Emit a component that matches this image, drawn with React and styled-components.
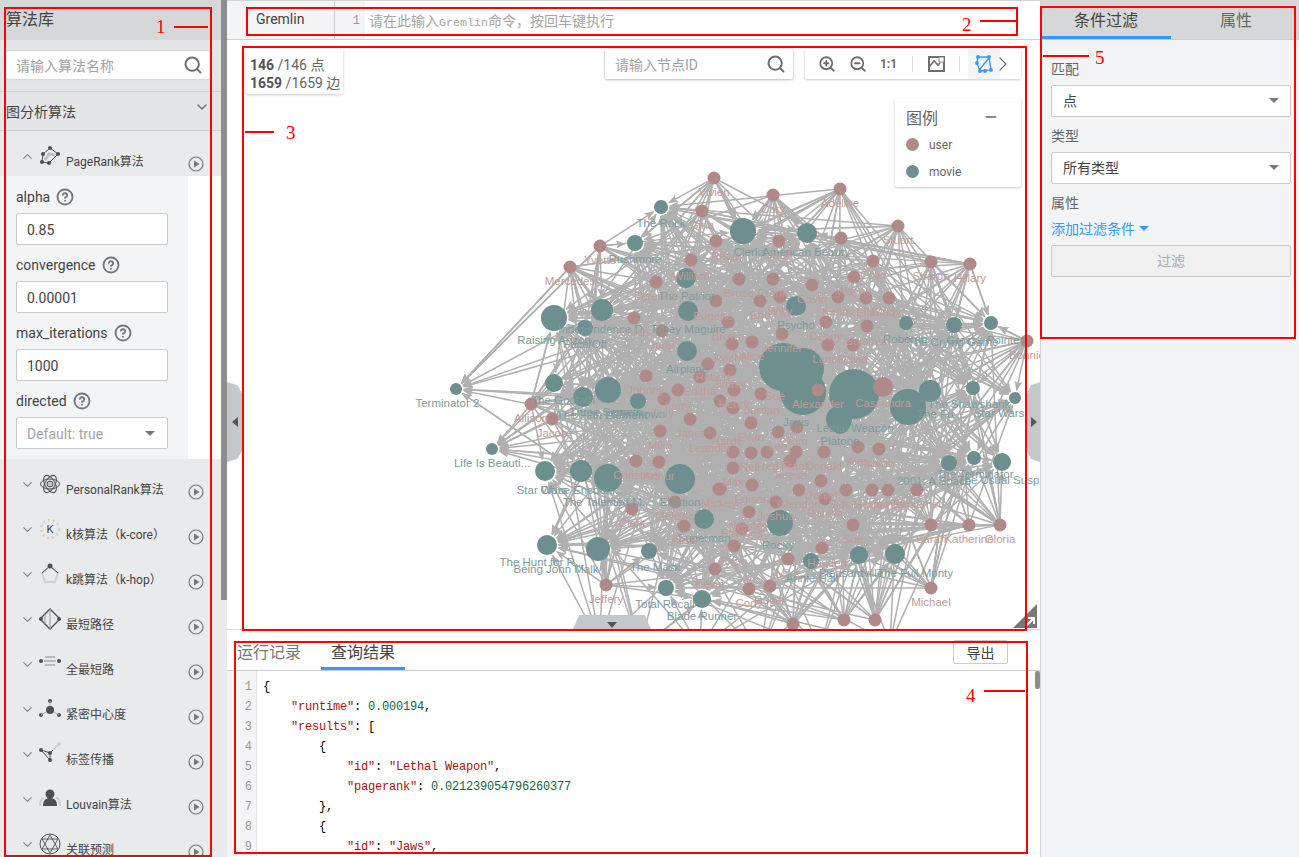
import React from 'react';
import styled, { createGlobalStyle } from 'styled-components';
import { Search, ChevronDown, ChevronUp, ChevronRight, ZoomIn, ZoomOut, Minus, CircleHelp } from 'lucide-react';

const GlobalStyle = createGlobalStyle`
  html, body {
    margin: 0;
    padding: 0;
    overflow: hidden;
    background: #fff;
    font-family: Roboto, "Noto Sans CJK SC", sans-serif;
    color: #333;
  }
  * { box-sizing: border-box; }
`;

const Page = styled.div`
  position: relative;
  display: flex;
  width: 1299px;
  height: 857px;
  overflow: hidden;
`;

/* ---------- left panel ---------- */
const Sidebar = styled.aside`
  width: 221px;
  height: 857px;
  overflow: hidden;
  background: #e9eaec;
  flex: none;
`;

const SidebarTitle = styled.div`
  height: 40px;
  padding-left: 6px;
  line-height: 40px;
  font-size: 16px;
  background: #d6d7d9;
  color: #444;
`;

const SearchArea = styled.div`
  height: 52px;
  padding: 11px 11px 0 6px;
  background: #e4e5e7;
  border-bottom: 1px solid #cfd0d2;
`;

const SearchBox = styled.div`
  display: flex;
  align-items: center;
  justify-content: space-between;
  height: ${({ $h }) => $h || 28}px;
  padding: 0 7px 0 10px;
  background: #fff;
  border-radius: 2px;
  box-shadow: 0 0 2px rgba(0, 0, 0, 0.2);
  font-size: 14px;
  color: #a3a3a3;
  svg { color: #6f6f6f; }
`;

const GroupTitle = styled.div`
  display: flex;
  align-items: center;
  justify-content: space-between;
  height: 39px;
  padding: 0 11px 0 6px;
  font-size: 14px;
  color: #444;
  background: #e4e5e7;
  border-bottom: 1px solid #cfd0d2;
  svg { color: #777; margin-top: -8px; }
`;

const AlgoRow = styled.div`
  display: flex;
  align-items: flex-start;
  height: 45px;
  padding-left: 20px;
  background: #e9eaec;
`;

const RowChevron = styled.span`
  display: flex;
  width: 15px;
  margin-top: 18px;
  margin-right: 3px;
  color: #8a8a8a;
`;

const AlgoIcon = styled.svg`
  width: 22px;
  height: 22px;
  margin-top: 14px;
  margin-left: 1px;
  flex: none;
  overflow: visible;
`;

const AlgoName = styled.span`
  flex: 1;
  margin-top: 22px;
  margin-left: 5px;
  font-size: 12px;
  line-height: 18px;
  color: #444;
  white-space: nowrap;
`;

const PlayIcon = styled.svg`
  width: 16px;
  height: 16px;
  margin-top: 25px;
  margin-right: 17px;
  flex: none;
`;

const ParamsWrap = styled.div`
  display: flex;
  background: #fff;
`;

const Params = styled.div`
  width: 188px;
  height: 283px;
  padding: 11px 20px 0 16px;
  background: #f3f4f6;
`;

const ParamLabel = styled.div`
  display: flex;
  align-items: center;
  gap: 6px;
  height: 20px;
  font-size: 14px;
  color: #444;
  svg { color: #777; }
`;

const ParamInput = styled.div`
  display: flex;
  align-items: center;
  justify-content: space-between;
  height: 32px;
  margin: 6px 0 10px;
  padding: 1px 12px 0 10px;
  background: #fff;
  border: 1px solid #ccc;
  border-radius: 2px;
  font-size: 14px;
  color: ${({ $muted }) => ($muted ? '#a5a5a5' : '#444')};
`;

const Caret = styled.span`
  width: 0;
  height: 0;
  border-left: 5px solid transparent;
  border-right: 5px solid transparent;
  border-top: 5px solid ${({ $color }) => $color || '#777'};
`;

const Scrollbar = styled.div`
  width: 6px;
  flex: none;
  background: linear-gradient(#8e8e8e 0, #8e8e8e 600px, #e9eaec 600px);
`;

/* ---------- centre ---------- */
const Main = styled.main`
  display: flex;
  flex-direction: column;
  width: 813px;
  height: 857px;
  flex: none;
  border-top: 1px solid #d4d4d4;
`;

const QueryBar = styled.div`
  display: flex;
  height: 39px;
  flex: none;
  border-bottom: 1px solid #cfcfcf;
  font-size: 14px;
`;

const QueryKind = styled.div`
  width: 108px;
  padding: 10px 0 0 29px;
  background: #f3f4f6;
  border-right: 1px solid #ccc;
  color: #444;
`;

const QueryGutter = styled.div`
  width: 30px;
  padding: 13px 5px 0 0;
  text-align: right;
  background: #f3f4f6;
  color: #999;
  font: 12px "Liberation Mono", monospace;
`;

const QueryHolder = styled.div`
  padding: 9px 0 0 4px;
  color: #a5a5a5;
  font-family: "Noto Sans CJK SC", sans-serif;
  font-size: 14px;
`;

const QueryLatin = styled.span`
  font: 11.67px "Liberation Mono", monospace;
`;

const GraphArea = styled.section`
  position: relative;
  height: 590px;
  flex: none;
  overflow: hidden;
  background: #fff;
  border-bottom: 1px solid #dcdcdc;
`;

const GraphSvg = styled.svg`
  position: absolute;
  left: 0;
  top: 0;
  width: 813px;
  height: 589px;
  text { font-family: "Liberation Sans", Arial, sans-serif; font-size: 11.5px; text-anchor: middle; }
`;

const Floating = styled.div`
  position: absolute;
  left: ${({ $x }) => $x}px;
  top: ${({ $y }) => $y}px;
  width: ${({ $w }) => $w}px;
  background: #fff;
  border-radius: 2px;
  box-shadow: 0 1px 3px rgba(0, 0, 0, 0.22);
`;

const Stats = styled(Floating)`
  height: 46px;
  padding: 8px 0 0 4px;
  font-size: 14px;
  line-height: 18px;
  color: #666;
  white-space: nowrap;
  b { color: #555; font-weight: 700; }
`;

const Toolbar = styled(Floating)`
  display: flex;
  align-items: center;
  height: 30px;
  padding-left: 6px;
  color: #6e6e6e;
`;

const ToolSlot = styled.span`
  display: flex;
  align-items: center;
  justify-content: center;
  width: ${({ $w }) => $w || 31}px;
  height: 30px;
  font-size: 12px;
  font-weight: 700;
  background: ${({ $active }) => ($active ? '#f3f4f6' : 'transparent')};
`;

const ToolDivider = styled.span`
  width: 1px;
  height: 16px;
  margin: 0 8px;
  background: #ddd;
`;

const ToolChevron = styled.span`
  display: flex;
  margin-left: -9px;
  color: #777;
`;

const Legend = styled(Floating)`
  height: 89px;
  padding: 8px 11px;
  font-size: 12px;
  color: #666;
`;

const LegendHead = styled.div`
  display: flex;
  align-items: center;
  justify-content: space-between;
  height: 22px;
  margin-bottom: 3px;
  padding-right: 11px;
  font-size: 16px;
  svg { color: #666; }
`;

const LegendItem = styled.div`
  display: flex;
  align-items: center;
  gap: 10px;
  height: 27px;
`;

const Dot = styled.i`
  width: 13px;
  height: 13px;
  border-radius: 50%;
  background: ${({ $color }) => $color};
`;

const SideHandle = styled.div`
  position: absolute;
  top: 342px;
  ${({ $side }) => $side}: 0;
  display: flex;
  align-items: center;
  justify-content: center;
  width: ${({ $w }) => $w}px;
  height: 80px;
  background: #c5c8cb;
  clip-path: ${({ $side }) => ($side === 'left'
    ? 'polygon(0 0, 70% 4%, 100% 14%, 100% 86%, 70% 96%, 0 100%)'
    : 'polygon(100% 0, 30% 4%, 0 14%, 0 86%, 30% 96%, 100% 100%)')};
`;

const Arrow = styled.span`
  width: 0;
  height: 0;
  border-top: 5px solid transparent;
  border-bottom: 5px solid transparent;
  ${({ $dir }) => ($dir === 'left' ? 'border-right: 6px solid #555;' : 'border-left: 6px solid #555;')}
`;

const BottomHandle = styled.div`
  position: absolute;
  left: 346px;
  bottom: 0;
  display: flex;
  justify-content: center;
  align-items: flex-end;
  width: 78px;
  height: 14px;
  padding-bottom: 1px;
  background: #c5c8cb;
  clip-path: polygon(8% 0, 92% 0, 100% 100%, 0 100%);
  border-radius: 6px 6px 0 0;
`;

const ArrowDown = styled.span`
  width: 0;
  height: 0;
  border-left: 5px solid transparent;
  border-right: 5px solid transparent;
  border-top: 6px solid #555;
`;

const CornerSvg = styled.svg`
  position: absolute;
  right: 3px;
  bottom: 1px;
  width: 24px;
  height: 24px;
`;

const ResultPanel = styled.section`
  position: relative;
  flex: 1;
  overflow: hidden;
`;

const ResultTabs = styled.div`
  display: flex;
  align-items: stretch;
  height: 41px;
  padding-left: 10px;
  border-bottom: 1px solid #ccc;
  font-size: 16px;
`;

const ResultTab = styled.div`
  width: ${({ $w }) => $w}px;
  margin-right: ${({ $mr }) => $mr || 0}px;
  padding: 9px 0 0 ${({ $pl }) => $pl || 0}px;
  color: ${({ $active }) => ($active ? '#444' : '#777')};
  border-bottom: ${({ $active }) => ($active ? '3px solid #3399ff' : 'none')};
`;

const ExportBtn = styled.button`
  height: 24px;
  width: 55px;
  margin: 10px 0 0 auto;
  margin-right: 32px;
  padding: 0;
  background: #fff;
  border: 1px solid #ccc;
  border-radius: 2px;
  font: 14px "Noto Sans CJK SC", sans-serif;
  color: #444;
`;

const ScrollThumb = styled.div`
  position: absolute;
  right: 0;
  top: 41px;
  width: 5px;
  height: 18px;
  border-radius: 2px;
  background: #8e8e8e;
`;

const CodeBody = styled.div`
  display: flex;
  height: 185px;
  overflow: hidden;
`;

const Gutter = styled.div`
  width: 30px;
  padding: 6px 4px 0 0;
  text-align: right;
  background: #f3f4f6;
  border-right: 1px solid #e6e6e6;
  font: 12px/20px "Liberation Mono", monospace;
  color: #999;
`;

const Code = styled.pre`
  margin: 0;
  padding: 6px 0 0 6px;
  font: 12px/20px "Liberation Mono", monospace;
  letter-spacing: -0.2px;
  color: #000;
`;

const Str = styled.span`color: #a11;`;
const Num = styled.span`color: #164;`;

/* ---------- right panel ---------- */
const RightPanel = styled.aside`
  width: 259px;
  height: 857px;
  flex: none;
  background: #f3f4f6;
  border-left: 1px solid #d4d4d4;
`;

const RightTabs = styled.div`
  display: flex;
  height: 40px;
  background: #d6d7d9;
  border-bottom: 1px solid #ccc;
`;

const RightTab = styled.div`
  flex: none;
  width: 130px;
  height: 39px;
  padding-top: 7px;
  text-align: center;
  font-size: 16px;
  color: ${({ $active }) => ($active ? '#444' : '#666')};
  border-bottom: ${({ $active }) => ($active ? '3px solid #3399ff' : 'none')};
`;

const FilterForm = styled.div`
  padding: 19px 8px 0 10px;
`;

const FieldLabel = styled.div`
  height: 20px;
  font-size: 14px;
  line-height: 20px;
  color: #666;
`;

const SelectBox = styled.div`
  display: flex;
  align-items: center;
  justify-content: space-between;
  height: 32px;
  margin: 6px 0 ${({ $mb }) => $mb || 8}px;
  padding: 0 11px 2px;
  background: #fff;
  border: 1px solid #ccc;
  border-radius: 2px;
  font-size: 14px;
  color: #444;
`;

const AddLink = styled.div`
  display: flex;
  align-items: center;
  gap: 4px;
  height: 20px;
  margin: 5px 0 7px;
  font-size: 14px;
  color: #3399ff;
`;

const FilterBtn = styled.div`
  height: 32px;
  line-height: 30px;
  text-align: center;
  font-size: 14px;
  color: #aaa;
  background: #f0f0f0;
  border: 1px solid #ccc;
  border-radius: 2px;
`;

/* ---------- red annotations ---------- */
const RedBox = styled.div`
  position: absolute;
  left: ${({ $x }) => $x}px;
  top: ${({ $y }) => $y}px;
  width: ${({ $w }) => $w}px;
  height: ${({ $h }) => $h}px;
  border: 2px solid #f00;
  pointer-events: none;
`;

const RedLine = styled.div`
  position: absolute;
  left: ${({ $x }) => $x}px;
  top: ${({ $y }) => $y}px;
  width: ${({ $w }) => $w}px;
  height: 2px;
  background: #f00;
`;

const RedNum = styled.div`
  position: absolute;
  left: ${({ $x }) => $x}px;
  top: ${({ $y }) => $y}px;
  font: 400 19px/20px "Liberation Serif", serif;
  color: #f00;
`;

/* ---------- graph data, in page coordinates ---------- */
const MOVIE = '#6d8f8f';
const USER = '#b08a89';

// x, y, radius, label, labelY, labelX
const movies = [
  [661, 208, 7, 'The Rock', 228], [635, 244, 8, 'Rushmore', 264], [554, 319, 13, 'Raising Arizon', 345],
  [602, 311, 11, 'Independence D.', 334], [585, 329, 8, 'Face/Off', 349], [687, 352, 10, 'Airplane', 374],
  [686, 279, 10, 'The Patriot', 301], [688, 312, 10, 'Tobey Maguire', 334], [456, 390, 6, 'Terminator 2:', 408, 449],
  [554, 384, 9, 'The Godfath', 405, 563], [608, 391, 13, 'Three Semeth', 417, 606], [583, 398, 10, 'The Fifth Element', 420, 602],
  [638, 402, 8, 'Chinatown', 419, 638], [743, 232, 13, 'Clerks', 257, 750], [807, 234, 10, 'American Beauty', 257, 806],
  [796, 307, 10, 'Psycho', 330], [906, 324, 7, 'Roberop', 344, 905], [954, 326, 8, 'The Crying Game', 347, 953],
  [991, 324, 7, 'Grosse Pointe', 345, 983], [783, 368, 24], [803, 370, 21], [803, 393, 23, 'Jaws', 427, 796],
  [854, 395, 25, 'Cassandra', 408, -1], [908, 408, 18, 'The Fu...', 419, 940], [930, 392, 11, 'The Shawshank', 409, 969],
  [973, 389, 7], [1015, 399, 6, 'Star Wars', 418, 999], [839, 420, 13, 'Lethal Weapon', 433, 855],
  [840, 425, 10, 'Platoon', 446, 840], [949, 464, 8, 'The Terminator', 479, 975], [974, 459, 7, '2001: A Space', 486, 934],
  [1002, 463, 9, 'The Usual Susp.', 485, 1000], [780, 524, 13, 'Rocky', 550, 778], [811, 562, 8, 'Annie Hall', 583, 812],
  [859, 556, 9, 'Pleasantville', 578, 851], [895, 555, 10, 'The Full Monty', 578, 915], [492, 450, 6, 'Life Is Beauti...', 468, 492],
  [545, 472, 10, 'Star Wars', 495, 542], [581, 472, 11, 'Close Encoun...', 495, 581], [608, 479, 14, 'The Talented M...', 507, 607],
  [680, 480, 15, 'Election', 507, 680], [704, 520, 10, 'Superman', 543, 704], [547, 546, 10, 'The Hunt for R...', 567, 542],
  [598, 550, 12, 'Being John Malk', 574, 556], [649, 552, 8, 'The Mask', 572, 655], [666, 589, 8, 'Total Recall', 609, 665],
  [702, 600, 9, 'Blade Runner', 621, 702],
];

const users = [
  ['Vivien', 714, 179], ['Gina', 702, 212], ['Reed', 716, 242, 261, 725], ['Yvette', 600, 247], ['Mercedes', 570, 268],
  ['William', 691, 261, 281], ['Terence', 656, 283], ['Eugene', 716, 302, 321, 713], ['Caleb', 634, 319], ['June', 662, 332],
  ['Robert', 708, 365, 382, 713], ['', 700, 378], ['Johnny', 646, 377], ['Editha', 678, 391, 396, 700], ['Ray', 664, 400],
  ['Larry', 720, 402, 411, 678], ['Cary', 773, 196], ['Adeline', 840, 190], ['Stuart', 898, 227], ['Jack', 779, 242],
  ['', 841, 239], ['Colin', 873, 262], ['Sharon', 931, 263], ['Hillary', 970, 265], ['Wayne', 854, 278], ['Frank', 773, 280],
  ['Bruce', 739, 280], ['Gavin', 812, 286], ['Kenny', 838, 298], ['Ella', 866, 299], ['Gladys', 889, 299], ['Willy', 780, 298],
  ['Eric', 760, 302], ['Brown', 728, 323], ['Denny', 826, 323], ['Solomon', 867, 327, 346, 868], ['Jennifer', 782, 335],
  ['Rachel', 732, 345], ['Alice', 752, 343], ['Lance', 828, 346], ['David', 853, 346], ['Bonnie', 1027, 342],
  ['Jimmy', 730, 371], ['Henry', 734, 391], ['Sue', 761, 395, 401, 775], ['Alexander', 818, 391], ['Cassandra', 883, 388, 408],
  ['Jordan', 733, 409, 415, 762], ['Evan', 751, 424], ['Tom', 797, 428], ['Leo', 778, 433], ['', 733, 453], ['Hardy', 751, 454, 446, 727],
  ['Fred', 767, 453], ['Frank', 796, 453], ['Donald', 824, 453], ['Alex', 858, 448], ['Isaiah', 879, 450], ['Teresa', 790, 462],
  ['Nell', 733, 469, 472, 750], ['Max', 752, 486, 487, 733], ['Daniel', 821, 482], ['Edison', 720, 490, 504, 752], ['Glendon', 799, 491],
  ['Darwin', 825, 500], ['Sidney', 846, 491], ['Harper', 872, 491], ['James', 888, 491], ['Benjamin', 917, 491], ['Joshua', 776, 503],
  ['Wesley', 749, 513], ['Frances', 742, 530, 538], ['Ryan', 734, 547, 566], ['Sue', 853, 526], ['Hayden', 822, 549, 568, 827],
  ['Mike', 788, 560], ['Cody', 749, 590], ['Roger', 770, 587], ['', 793, 625], ['', 844, 621], ['', 875, 621], ['Sarah', 931, 526],
  ['Katherine', 969, 526], ['Gloria', 1000, 526], ['Michael', 931, 589], ['Christine', 636, 462], ['Arthur', 659, 463],
  ['Mike', 660, 432], ['Janet', 690, 420], ['Leander', 710, 434, 453], ['Mickey', 719, 490], ['Clark', 632, 510], ['Melissa', 675, 503],
  ['Alisa', 684, 527], ['Kevin', 715, 570, 589, 710], ['Jeffery', 606, 586], ['Allison', 531, 405], ['Jacob', 552, 420],
];

const offscreen = [[700, 650], [640, 650], [760, 655], [820, 650], [600, 645], [890, 645]];

const rng = (seed) => () => {
  seed = (seed + 0x6d2b79f5) | 0;
  let t = Math.imul(seed ^ (seed >>> 15), 1 | seed);
  t = (t + Math.imul(t ^ (t >>> 7), 61 | t)) ^ t;
  return ((t ^ (t >>> 14)) >>> 0) / 4294967296;
};

const buildEdges = () => {
  const rand = rng(146);
  const out = [];
  const push = (sx, sy, sr, m) => {
    const dx = m[0] - sx;
    const dy = m[1] - sy;
    const d = Math.hypot(dx, dy) || 1;
    if (d < m[2] + 6) return;
    out.push({
      x1: sx + (dx / d) * sr,
      y1: sy + (dy / d) * sr,
      x2: m[0] - (dx / d) * (m[2] + 2),
      y2: m[1] - (dy / d) * (m[2] + 2),
    });
  };
  // picking the nearer of two movies thins the long lines across the outer ring
  const pick = (x, y) => {
    const a = movies[Math.floor(rand() * movies.length)];
    const b = movies[Math.floor(rand() * movies.length)];
    return Math.hypot(a[0] - x, a[1] - y) < Math.hypot(b[0] - x, b[1] - y) ? a : b;
  };
  users.forEach(([, x, y]) => {
    for (let i = 0; i < 19; i += 1) push(x, y, 6, pick(x, y));
  });
  offscreen.forEach(([x, y]) => {
    for (let i = 0; i < 6; i += 1) push(x, y, 0, pick(x, y));
  });
  return out;
};

const edges = buildEdges();

const GraphCanvas = () => (
  <GraphSvg viewBox="227 41 813 589">
    <defs>
      <marker id="tip" markerUnits="userSpaceOnUse" markerWidth="10" markerHeight="8" refX="9" refY="4" orient="auto">
        <path d="M0 0 L10 4 L0 8 L2 4 Z" fill="#b0b0b0" />
      </marker>
    </defs>
    <g stroke="#b0b0b0" strokeWidth="1.5">
      {edges.map((e, i) => (
        <line key={i} {...e} markerEnd="url(#tip)" />
      ))}
    </g>
    {movies.map(([x, y, r], i) => (
      <circle key={i} cx={x} cy={y} r={r} fill={MOVIE} />
    ))}
    {users.map(([, x, y], i) => (
      <circle key={i} cx={x} cy={y} r={x === 883 ? 10 : 6.5} fill={USER} />
    ))}
    {movies.filter((m) => m[3] && m[5] !== -1).map(([x, y, r, name, ly, lx], i) => (
      <text key={i} x={lx || x} y={ly} fill="#7b9c9c">{name}</text>
    ))}
    {users.filter((u) => u[0]).map(([name, x, y, ly, lx], i) => (
      <text key={i} x={lx || x} y={ly || y + 18} fill="#c09c9b">{name}</text>
    ))}
  </GraphSvg>
);

/* ---------- algorithm icons ---------- */
const ink = '#4f4f4f';
const pale = '#c4c4c4';

const iconParts = {
  pagerank: (
    <>
      <path d="M3 17 L4 9 L11 3 L19 9 L10 18 Z" fill="none" stroke={ink} />
      <path d="M6 15 L10 9 L16 10" fill="none" stroke={pale} strokeWidth="3" />
      {[[3, 17], [4, 9], [11, 3], [19, 9], [10, 18]].map(([x, y]) => <circle key={x + y} cx={x} cy={y} r="2" fill={ink} />)}
    </>
  ),
  personal: (
    <>
      <ellipse cx="11" cy="11" rx="9.5" ry="5" fill="none" stroke={ink} />
      <ellipse cx="11" cy="11" rx="9.5" ry="5" fill="none" stroke={ink} transform="rotate(60 11 11)" />
      <ellipse cx="11" cy="11" rx="9.5" ry="5" fill="none" stroke={ink} transform="rotate(120 11 11)" />
      <circle cx="11" cy="11" r="3" fill={pale} stroke={ink} />
    </>
  ),
  kcore: (
    <>
      <circle cx="11" cy="11" r="9" fill="none" stroke="#d0d0d0" strokeWidth="2.4" strokeDasharray="2 3" />
      <text x="11" y="15" textAnchor="middle" fontSize="11" fill="#444" fontFamily="Roboto, sans-serif">K</text>
    </>
  ),
  khop: (
    <>
      <path d="M11 3 L19 10 L16 19 L6 19 L3 10 Z" fill="none" stroke="#cfcfcf" strokeWidth="2" />
      <path d="M3 10 L11 3 L19 10" fill="none" stroke={ink} />
      <circle cx="11" cy="3" r="2.5" fill={ink} />
    </>
  ),
  path: (
    <>
      <path d="M1 11 L11 1 L21 11 L11 21 Z" fill="none" stroke={ink} strokeWidth="1.4" />
      <path d="M6 6 V16 M11 1 V21" stroke="#999" />
      <circle cx="2" cy="11" r="2" fill={ink} />
      <circle cx="20" cy="11" r="2" fill={ink} />
    </>
  ),
  allpath: (
    <>
      <circle cx="2" cy="8" r="2" fill={ink} />
      <circle cx="20" cy="8" r="2" fill={ink} />
      <path d="M6 4 H16 M5 8 H17 M6 12 H16" stroke="#aaa" strokeWidth="1.6" />
    </>
  ),
  close: (
    <>
      <circle cx="11" cy="3" r="2" fill={ink} />
      <circle cx="2" cy="17" r="2" fill={ink} />
      <circle cx="20" cy="17" r="2" fill={ink} />
      <path d="M11 3 V11 M2 17 L7 14 M15 14 L20 17" stroke="#aaa" />
      <circle cx="11" cy="12" r="4" fill={ink} />
    </>
  ),
  label: (
    <>
      <path d="M2 7 L11 10 L20 1" fill="none" stroke={ink} />
      <path d="M14 7 L20 1" stroke="#ccc" strokeWidth="1.5" />
      <path d="M2 7 L11 17 L11 10" fill="none" stroke={ink} />
      <circle cx="2" cy="7" r="2" fill={ink} />
      <circle cx="11" cy="10" r="2" fill={ink} />
      <circle cx="11" cy="17" r="2" fill={ink} />
      <circle cx="20" cy="1" r="2" fill="#ccc" />
    </>
  ),
  louvain: (
    <>
      <path d="M1 18 C1 12 3 10 5 10 M21 18 C21 12 19 10 17 10" fill="none" stroke="#c6d2d0" strokeWidth="2" />
      <circle cx="11" cy="6" r="4.5" fill={ink} />
      <path d="M4 18 C4 12 7 10 11 10 C15 10 18 12 18 18 Z" fill={ink} />
    </>
  ),
  link: (
    <>
      <circle cx="11" cy="11" r="10" fill="none" stroke={ink} />
      <path d="M11 2 L19 16 H3 Z M11 20 L3 6 H19 Z" fill="none" stroke={ink} strokeWidth="0.9" />
    </>
  ),
};

const Play = () => (
  <PlayIcon viewBox="0 0 16 16">
    <circle cx="8" cy="8" r="7" fill="none" stroke="#777" strokeWidth="1.2" />
    <path d="M6 4.5 L11.5 8 L6 11.5 Z" fill="#777" />
  </PlayIcon>
);

const Algo = ({ icon, name, open }) => (
  <AlgoRow>
    <RowChevron>{open ? <ChevronUp size={15} /> : <ChevronDown size={15} />}</RowChevron>
    <AlgoIcon viewBox="0 0 22 22">{iconParts[icon]}</AlgoIcon>
    <AlgoName>{name}</AlgoName>
    <Play />
  </AlgoRow>
);

const Help = () => <CircleHelp size={18} strokeWidth={2.5} />;

const ImageIcon = () => (
  <svg width="17" height="16" viewBox="0 0 17 16">
    <path d="M1 1 H16 V15 H1 Z" fill="none" stroke="#6e6e6e" strokeWidth="2" />
    <path d="M1 11 L6 5 L10 9 L12 7" fill="none" stroke="#6e6e6e" strokeWidth="1.6" />
    <rect x="11" y="1" width="5" height="5" fill="#fff" stroke="#6e6e6e" strokeWidth="0.8" />
  </svg>
);

const LayoutIcon = () => (
  <svg width="18" height="18" viewBox="0 0 18 18" fill="none" stroke="#3399ff" strokeWidth="1.3">
    <path d="M3 2 L14 2 L16 15 L5 16 L2 8 Z M14 3 L5 14" />
    {[[3, 2], [14, 2], [16, 15], [5, 16], [2, 8], [10, 16]].map(([x, y]) => <circle key={x * 20 + y} cx={x} cy={y} r="1.9" fill="#3399ff" stroke="none" />)}
  </svg>
);

const annotations = [
  { box: [4, 7, 208, 850], line: [174, 26, 34], num: ['1', 156, 17] },
  { box: [246, 7, 772, 29], line: [980, 20, 36], num: ['2', 962, 15] },
  { box: [242, 46, 785, 585], line: [245, 131, 29], num: ['3', 286, 123] },
  { box: [234, 641, 794, 213], line: [984, 690, 41], num: ['4', 966, 686] },
  { box: [1040, 6, 256, 333], line: [1043, 55, 46], num: ['5', 1095, 48] },
];

const App = () => (
  <>
    <GlobalStyle />
    <Page>
      <Sidebar>
        <SidebarTitle>算法库</SidebarTitle>
        <SearchArea>
          <SearchBox>
            请输入算法名称
            <Search size={20} strokeWidth={2.4} />
          </SearchBox>
        </SearchArea>
        <GroupTitle>
          图分析算法
          <ChevronDown size={16} strokeWidth={2.4} />
        </GroupTitle>
        <Algo icon="pagerank" name="PageRank算法" open />
        <ParamsWrap>
          <Params>
            <ParamLabel>alpha <Help /></ParamLabel>
            <ParamInput>0.85</ParamInput>
            <ParamLabel>convergence <Help /></ParamLabel>
            <ParamInput>0.00001</ParamInput>
            <ParamLabel>max_iterations <Help /></ParamLabel>
            <ParamInput>1000</ParamInput>
            <ParamLabel>directed <Help /></ParamLabel>
            <ParamInput $muted>Default: true<Caret /></ParamInput>
          </Params>
        </ParamsWrap>
        <Algo icon="personal" name="PersonalRank算法" />
        <Algo icon="kcore" name="k核算法（k-core）" />
        <Algo icon="khop" name="k跳算法（k-hop）" />
        <Algo icon="path" name="最短路径" />
        <Algo icon="allpath" name="全最短路" />
        <Algo icon="close" name="紧密中心度" />
        <Algo icon="label" name="标签传播" />
        <Algo icon="louvain" name="Louvain算法" />
        <Algo icon="link" name="关联预测" />
      </Sidebar>
      <Scrollbar />

      <Main>
        <QueryBar>
          <QueryKind>Gremlin</QueryKind>
          <QueryGutter>1</QueryGutter>
          <QueryHolder>请在此输入<QueryLatin>Gremlin</QueryLatin>命令，按回车键执行</QueryHolder>
        </QueryBar>

        <GraphArea>
          <GraphCanvas />
          <Stats $x={19} $y={8} $w={97}>
            <b>146</b> /146 点<br />
            <b>1659</b> /1659 边
          </Stats>
          <Floating $x={378} $y={9} $w={188}>
            <SearchBox $h={30}>
              请输入节点ID
              <Search size={20} strokeWidth={2.4} />
            </SearchBox>
          </Floating>
          <Toolbar $x={578} $y={9} $w={216}>
            <ToolSlot><ZoomIn size={18} strokeWidth={2.4} /></ToolSlot>
            <ToolSlot><ZoomOut size={18} strokeWidth={2.4} /></ToolSlot>
            <ToolSlot>1:1</ToolSlot>
            <ToolDivider />
            <ToolSlot $w={30}><ImageIcon /></ToolSlot>
            <ToolDivider />
            <ToolSlot $w={32} $active><LayoutIcon /></ToolSlot>
            <ToolChevron><ChevronRight size={24} strokeWidth={1.2} /></ToolChevron>
          </Toolbar>
          <Legend $x={668} $y={58} $w={126}>
            <LegendHead>图例<Minus size={16} strokeWidth={2.4} /></LegendHead>
            <LegendItem><Dot $color={USER} />user</LegendItem>
            <LegendItem><Dot $color={MOVIE} />movie</LegendItem>
          </Legend>
          <SideHandle $side="left" $w={15}><Arrow $dir="left" /></SideHandle>
          <SideHandle $side="right" $w={13}><Arrow $dir="right" /></SideHandle>
          <BottomHandle><ArrowDown /></BottomHandle>
          <CornerSvg viewBox="0 0 24 24">
            <path d="M24 0 V24 H0 Z" fill="#777" />
            <path d="M14 21 L20 15 M15 14 H21 V20" fill="none" stroke="#fff" strokeWidth="2" />
          </CornerSvg>
        </GraphArea>

        <ResultPanel>
          <ResultTabs>
            <ResultTab $w={74} $mr={10}>运行记录</ResultTab>
            <ResultTab $w={84} $pl={10} $active>查询结果</ResultTab>
            <ExportBtn>导出</ExportBtn>
          </ResultTabs>
          <ScrollThumb />
          <CodeBody>
            <Gutter>
              {[1, 2, 3, 4, 5, 6, 7, 8, 9].map((n) => <div key={n}>{n}</div>)}
            </Gutter>
            <Code>
              {'{\n    '}<Str>"runtime"</Str>{': '}<Num>0.000194</Num>{',\n    '}
              <Str>"results"</Str>{': [\n        {\n            '}
              <Str>"id"</Str>{': '}<Str>"Lethal Weapon"</Str>{',\n            '}
              <Str>"pagerank"</Str>{': '}<Num>0.021239054796260377</Num>{'\n        },\n        {\n            '}
              <Str>"id"</Str>{': '}<Str>"Jaws"</Str>{','}
            </Code>
          </CodeBody>
        </ResultPanel>
      </Main>

      <RightPanel>
        <RightTabs>
          <RightTab $active>条件过滤</RightTab>
          <RightTab>属性</RightTab>
        </RightTabs>
        <FilterForm>
          <FieldLabel>匹配</FieldLabel>
          <SelectBox $mb={9}>点<Caret /></SelectBox>
          <FieldLabel>类型</FieldLabel>
          <SelectBox $mb={9}>所有类型<Caret /></SelectBox>
          <FieldLabel>属性</FieldLabel>
          <AddLink>添加过滤条件<Caret $color="#3399ff" /></AddLink>
          <FilterBtn>过滤</FilterBtn>
        </FilterForm>
      </RightPanel>

      {annotations.map(({ box, line, num }) => (
        <React.Fragment key={num[0]}>
          <RedBox $x={box[0]} $y={box[1]} $w={box[2]} $h={box[3]} />
          <RedLine $x={line[0]} $y={line[1]} $w={line[2]} />
          <RedNum $x={num[1]} $y={num[2]}>{num[0]}</RedNum>
        </React.Fragment>
      ))}
    </Page>
  </>
);

export default App;
